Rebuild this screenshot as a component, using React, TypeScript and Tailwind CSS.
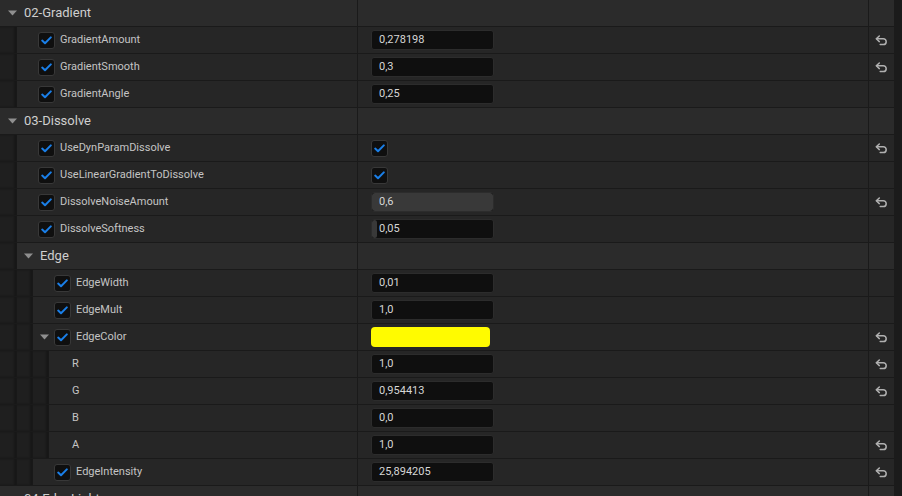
import React from 'react';

type Value =
  | { kind: 'num'; text: string }
  | { kind: 'slider'; text: string; fill: number }
  | { kind: 'check' }
  | { kind: 'color'; color: string };

type Row = {
  type: 'group' | 'sub' | 'prop' | 'channel';
  depth: number;
  label: string;
  expander?: boolean;
  value?: Value;
  reset?: boolean;
};

const rows: Row[] = [
  { type: 'group', depth: 0, label: '02-Gradient' },
  { type: 'prop', depth: 1, label: 'GradientAmount', value: { kind: 'num', text: '0,278198' }, reset: true },
  { type: 'prop', depth: 1, label: 'GradientSmooth', value: { kind: 'num', text: '0,3' }, reset: true },
  { type: 'prop', depth: 1, label: 'GradientAngle', value: { kind: 'num', text: '0,25' } },
  { type: 'group', depth: 0, label: '03-Dissolve' },
  { type: 'prop', depth: 1, label: 'UseDynParamDissolve', value: { kind: 'check' }, reset: true },
  { type: 'prop', depth: 1, label: 'UseLinearGradientToDissolve', value: { kind: 'check' } },
  { type: 'prop', depth: 1, label: 'DissolveNoiseAmount', value: { kind: 'slider', text: '0,6', fill: 100 }, reset: true },
  { type: 'prop', depth: 1, label: 'DissolveSoftness', value: { kind: 'slider', text: '0,05', fill: 4 } },
  { type: 'sub', depth: 1, label: 'Edge' },
  { type: 'prop', depth: 2, label: 'EdgeWidth', value: { kind: 'num', text: '0,01' } },
  { type: 'prop', depth: 2, label: 'EdgeMult', value: { kind: 'num', text: '1,0' } },
  { type: 'prop', depth: 2, label: 'EdgeColor', expander: true, value: { kind: 'color', color: '#fffb00' }, reset: true },
  { type: 'channel', depth: 3, label: 'R', value: { kind: 'num', text: '1,0' }, reset: true },
  { type: 'channel', depth: 3, label: 'G', value: { kind: 'num', text: '0,954413' }, reset: true },
  { type: 'channel', depth: 3, label: 'B', value: { kind: 'num', text: '0,0' } },
  { type: 'channel', depth: 3, label: 'A', value: { kind: 'num', text: '1,0' }, reset: true },
  { type: 'prop', depth: 2, label: 'EdgeIntensity', value: { kind: 'num', text: '25,894205' }, reset: true },
  { type: 'group', depth: 0, label: '04-EdgeLight' },
];

const stripWidths = ['w-[17px]', 'w-[16px]', 'w-[16px]'];

const Triangle = () => (
  <svg width="9" height="6" viewBox="0 0 9 6" className="shrink-0">
    <path d="M0 0.5 H9 L4.5 5.5 Z" fill="#8f8f8f" />
  </svg>
);

const CheckBox = () => (
  <div className="w-[17px] h-[17px] shrink-0 rounded-[3px] bg-[#0f0f0f] border border-[#383838] flex items-center justify-center">
    <svg width="11" height="9" viewBox="0 0 11 9">
      <path d="M1.2 4.6 L4 7.2 L9.8 1.4" fill="none" stroke="#1a7fe8" strokeWidth="2" strokeLinecap="round" strokeLinejoin="round" />
    </svg>
  </div>
);

const ResetIcon = () => (
  <svg width="13" height="11" viewBox="0 0 13 11">
    <path d="M4.3 1 L1.3 3.8 L4.3 6.6" fill="none" stroke="#b0b0b0" strokeWidth="1.5" strokeLinecap="round" strokeLinejoin="round" />
    <path d="M1.6 3.8 H8.3 A2.9 2.9 0 0 1 8.3 9.6 H5.2" fill="none" stroke="#b0b0b0" strokeWidth="1.5" strokeLinecap="round" />
  </svg>
);

const ValueCell = ({ value }: { value?: Value }) => {
  if (!value) return null;
  if (value.kind === 'check') return <CheckBox />;
  if (value.kind === 'color')
    return <div className="w-[119px] h-[20px] rounded-[4px]" style={{ backgroundColor: value.color }} />;
  if (value.kind === 'slider')
    return (
      <div className="relative w-[123px] h-[20px] rounded-[3px] bg-[#0f0f0f] border border-[#2c2c2c] overflow-hidden flex items-center">
        <div className="absolute left-0 top-0 bottom-0 bg-[#393939] rounded-[3px]" style={{ width: `${value.fill}%` }} />
        <span className="relative pl-[7px] text-[11px] text-[#d6d6d6]">{value.text}</span>
      </div>
    );
  return (
    <div className="w-[123px] h-[20px] rounded-[3px] bg-[#0f0f0f] border border-[#2c2c2c] flex items-center pl-[7px] text-[11px] text-[#d6d6d6]">
      {value.text}
    </div>
  );
};

const PropertyRow = ({ row }: { row: Row }) => {
  const isHeader = row.type === 'group' || row.type === 'sub';
  const bg = isHeader ? 'bg-[#2b2b2b]' : 'bg-[#262626]';
  return (
    <div className={`flex h-[27px] shrink-0 border-b border-[#1a1a1a] ${bg}`}>
      <div className="w-[358px] shrink-0 flex border-r border-[#1a1a1a]">
        {stripWidths.slice(0, row.depth).map((w, i) => (
          <div key={i} className={`${w} shrink-0 bg-[#1f1f1f] border-r border-[#181818] shadow-[inset_-2px_0_2px_rgba(0,0,0,0.25)]`} />
        ))}
        {row.type === 'group' && (
          <div className="flex items-center pl-[8px] gap-[7px]">
            <Triangle />
            <span className="text-[13px] text-[#cfcfcf]">{row.label}</span>
          </div>
        )}
        {row.type === 'sub' && (
          <div className="flex items-center pl-[7px] gap-[7px]">
            <Triangle />
            <span className="text-[13px] text-[#cfcfcf]">{row.label}</span>
          </div>
        )}
        {row.type === 'prop' && (
          <div className="flex items-center">
            {row.expander ? (
              <div className="w-[21px] flex justify-center pl-[2px]">
                <Triangle />
              </div>
            ) : (
              <div className="w-[21px]" />
            )}
            <CheckBox />
            <span className="ml-[5px] text-[11px] text-[#c4c4c4]">{row.label}</span>
          </div>
        )}
        {row.type === 'channel' && (
          <div className="flex items-center pl-[23px]">
            <span className="text-[11px] text-[#c4c4c4]">{row.label}</span>
          </div>
        )}
      </div>
      <div className="w-[511px] shrink-0 flex items-center pl-[13px] border-r border-[#1a1a1a]">
        <ValueCell value={row.value} />
      </div>
      <div className="w-[25px] shrink-0 flex items-center justify-center">
        {row.reset && <ResetIcon />}
      </div>
    </div>
  );
};

export default function App() {
  return (
    <div className="w-[902px] h-[496px] overflow-hidden flex bg-[#1a1a1a]" style={{ fontFamily: 'Roboto, "Noto Sans", sans-serif' }}>
      <div className="w-[894px] shrink-0 flex flex-col">
        {rows.map((row, i) => (
          <PropertyRow key={i} row={row} />
        ))}
      </div>
      <div className="w-[8px] shrink-0 bg-[#1b1b1b]" />
    </div>
  );
}
